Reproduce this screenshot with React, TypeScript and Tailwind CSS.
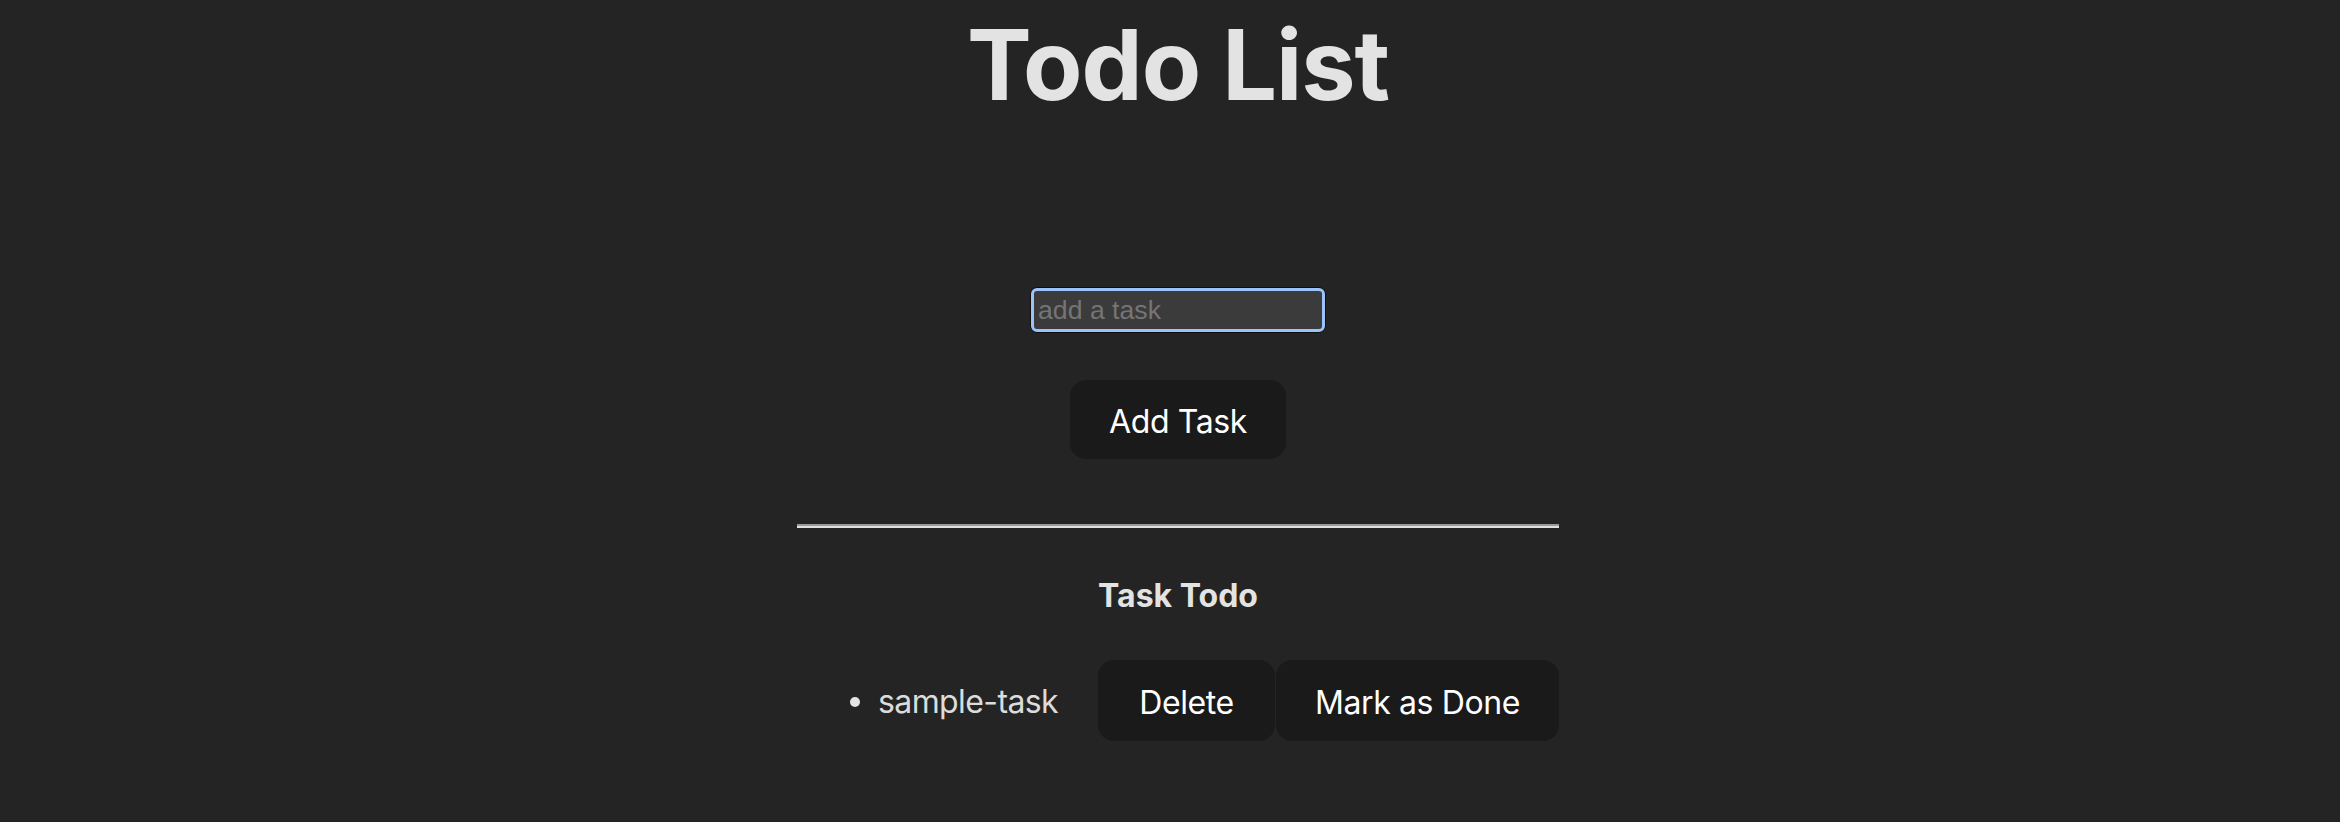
const App = () => {
    return (
        <div className="min-h-screen w-full bg-[#242424] flex flex-col items-center pl-[16px] font-['Inter',sans-serif] text-[#e3e3e3]">
            <h1 className="mt-[16px] text-[97px] leading-none font-bold tracking-[-1px]">Todo List</h1>
            <div className="mt-[174px] rounded-[8px] bg-[#0e0e0e] p-[1px]">
                <input
                    type="text"
                    placeholder="add a task"
                    className="block w-[294px] h-[44px] border-[3px] border-[#9cc2fa] rounded-[6px] bg-[#3b3b3b] pl-[4px] pr-[2px] text-[26.67px] font-['Liberation_Sans',Arial,sans-serif] text-white placeholder:text-[#757575] outline-none"
                />
            </div>
            <button className="mt-[47px] w-[216px] h-[79px] pt-[4px] rounded-[16px] bg-[#1a1a1a] text-white text-[32px] tracking-[-0.4px]">Add Task</button>
            <hr className="mt-[65px] w-[762px] h-[4px] border-0 border-t-[2px] border-b-[2px] border-t-[#9a9a9a] border-b-[#e0e0e0]" />
            <h3 className="mt-[52px] text-[32px] leading-none font-bold">Task Todo</h3>
            <div className="mt-[48px] w-[762px] flex items-center justify-between pl-[53px]">
                <div className="flex items-center gap-[18px] pt-[3px]">
                    <span className="w-[10px] h-[10px] rounded-full bg-[#e3e3e3]"></span>
                    <span className="text-[32px] text-[#dcdcdc] tracking-[-0.6px]">sample-task</span>
                </div>
                <div className="flex gap-[1px]">
                    <button className="w-[177px] h-[81px] pt-[4px] rounded-[16px] bg-[#1a1a1a] text-white text-[32px] tracking-[-0.4px]">Delete</button>
                    <button className="w-[283px] h-[81px] pt-[4px] rounded-[16px] bg-[#1a1a1a] text-white text-[32px] tracking-[-0.4px]">Mark as Done</button>
                </div>
            </div>
        </div>
    )
}
export default App
